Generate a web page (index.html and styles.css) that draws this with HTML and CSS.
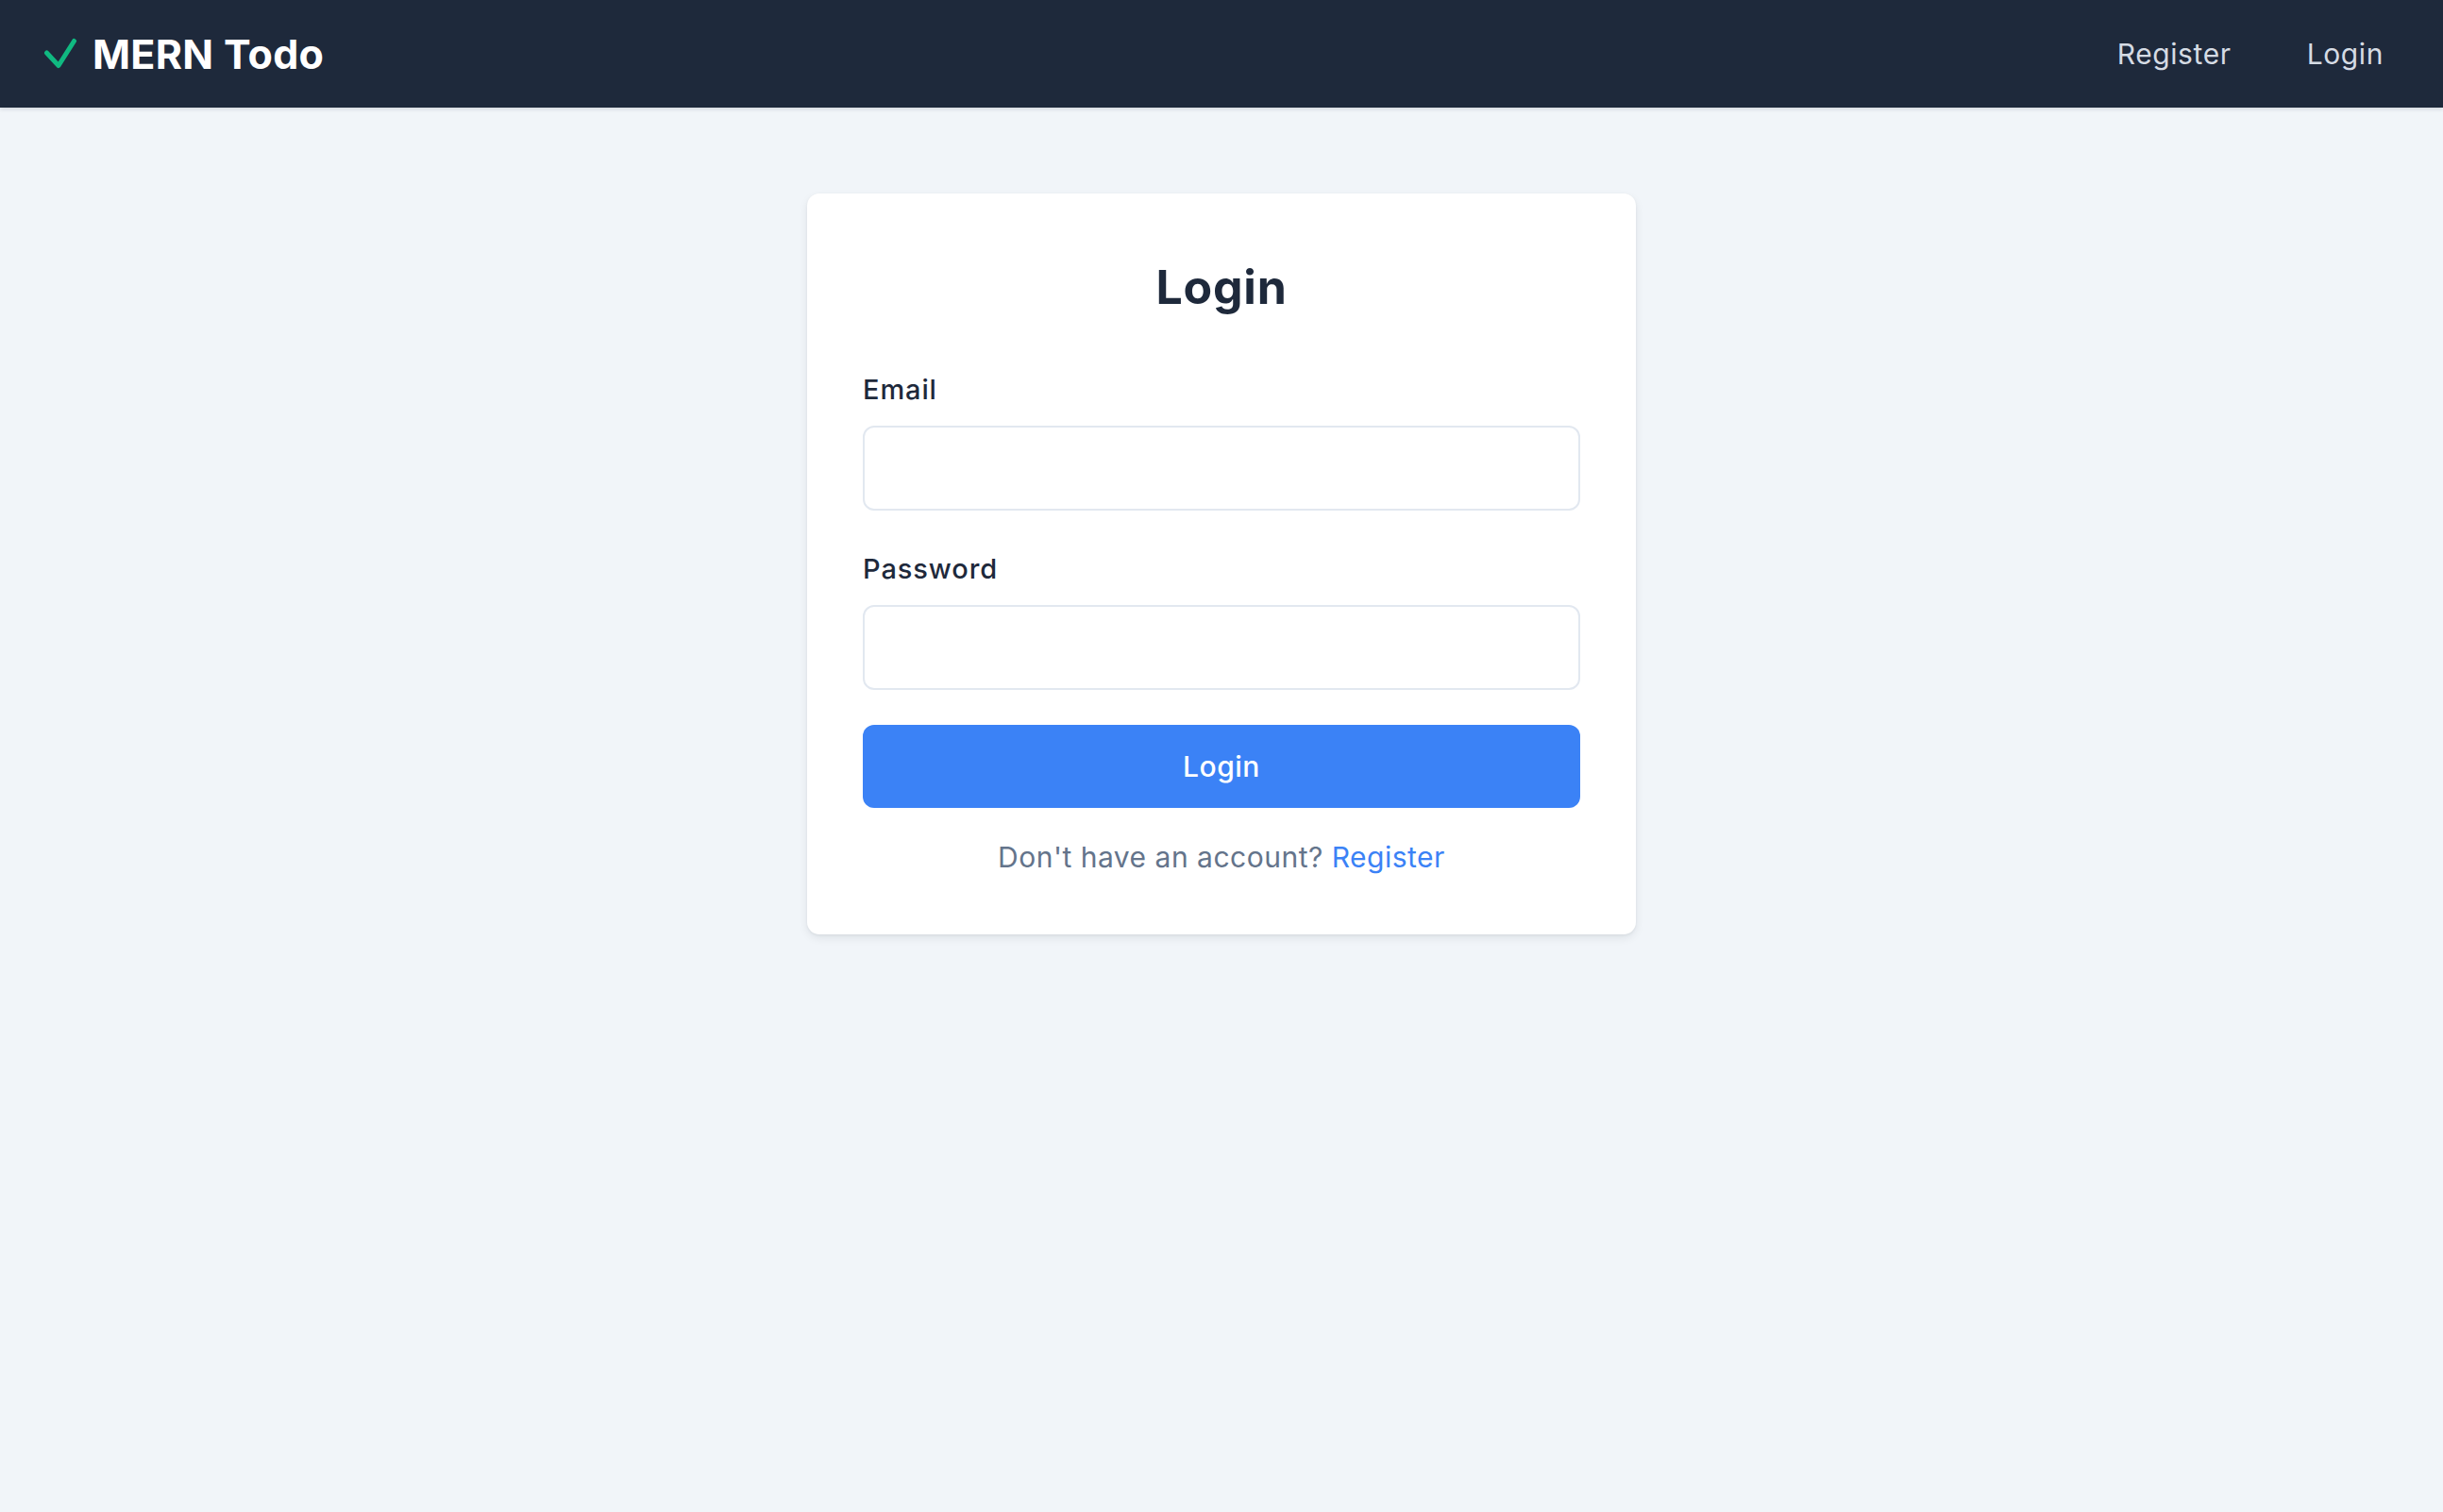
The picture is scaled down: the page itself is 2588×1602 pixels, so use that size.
FILE: index.html
```html
<!DOCTYPE html>
<html lang="en">
<head>
<meta charset="utf-8">
<title>MERN Todo</title>
<link rel="stylesheet" href="styles.css">
</head>
<body>
<header class="navbar">
  <a class="brand" href="#">
    <svg class="brand-icon" width="36" height="34" viewBox="0 0 36 34" aria-hidden="true">
      <polyline points="3.5,16 16,29.5 32.5,3.5" fill="none" stroke="#10b981" stroke-width="5" stroke-linecap="round" stroke-linejoin="round"/>
    </svg>
    <span class="brand-text">MERN Todo</span>
  </a>
  <nav class="nav-links">
    <a href="#" class="nav-link">Register</a>
    <a href="#" class="nav-link">Login</a>
  </nav>
</header>
<main class="page">
  <section class="card">
    <h1 class="card-title">Login</h1>
    <form class="form">
      <div class="field">
        <label class="field-label" for="email">Email</label>
        <input class="field-input" id="email" type="email">
      </div>
      <div class="field field-last">
        <label class="field-label" for="password">Password</label>
        <input class="field-input" id="password" type="password">
      </div>
      <button class="btn-primary" type="button">Login</button>
    </form>
    <p class="card-footer">Don't have an account? <a href="#" class="link">Register</a></p>
  </section>
</main>
</body>
</html>
```

FILE: styles.css
```css
* { box-sizing: border-box; }

html, body {
  margin: 0;
  padding: 0;
}

body {
  background: #f1f5f9;
  font-family: "Inter", "Noto Sans", sans-serif;
  color: #1e293b;
  min-height: 1602px;
}

a { text-decoration: none; }

.navbar {
  height: 114px;
  background: #1e293b;
  display: flex;
  align-items: center;
  justify-content: space-between;
  padding: 0 63px 0 46px;
  box-shadow: 0 2px 4px rgba(15, 23, 42, 0.12);
}

.brand {
  display: flex;
  align-items: center;
  gap: 16px;
  color: #ffffff;
}

.brand-icon {
  display: block;
}

.brand-text {
  font-size: 43px;
  font-weight: 700;
  line-height: 1;
  letter-spacing: 0.3px;
}

.nav-links {
  display: flex;
  align-items: center;
  gap: 80px;
}

.nav-link {
  color: #d5dbe4;
  font-size: 30px;
  font-weight: 400;
  line-height: 1;
  letter-spacing: 0.6px;
}

.page {
  display: flex;
  justify-content: center;
  padding-top: 91px;
}

.card {
  width: 878px;
  background: #ffffff;
  border-radius: 13px;
  padding: 59px;
  box-shadow: 0 4px 10px rgba(15, 23, 42, 0.08), 0 1px 3px rgba(15, 23, 42, 0.06);
}

.card-title {
  margin: 0 0 47px;
  text-align: center;
  font-size: 50px;
  line-height: 80px;
  font-weight: 700;
  color: #1e293b;
  letter-spacing: 0.8px;
}

.form {
  display: flex;
  flex-direction: column;
}

.field {
  display: flex;
  flex-direction: column;
  margin-bottom: 40px;
}

.field-last {
  margin-bottom: 37px;
}

.field-label {
  font-size: 29px;
  line-height: 44px;
  font-weight: 500;
  color: #1e293b;
  margin-bottom: 16px;
  letter-spacing: 0.9px;
}

.field-input {
  height: 90px;
  width: 100%;
  border: 2px solid #e2e8f0;
  border-radius: 12px;
  background: #ffffff;
  font: inherit;
  font-size: 29px;
  padding: 0 24px;
  outline: none;
}

.btn-primary {
  height: 88px;
  width: 100%;
  border: none;
  border-radius: 12px;
  background: #3b82f6;
  color: #ffffff;
  font-family: inherit;
  font-size: 30px;
  font-weight: 500;
  letter-spacing: 0.5px;
  cursor: pointer;
}

.card-footer {
  margin: 30px 0 0;
  text-align: center;
  font-size: 30px;
  line-height: 45px;
  color: #64748b;
  letter-spacing: 0.5px;
}

.link {
  color: #3b82f6;
}
```
